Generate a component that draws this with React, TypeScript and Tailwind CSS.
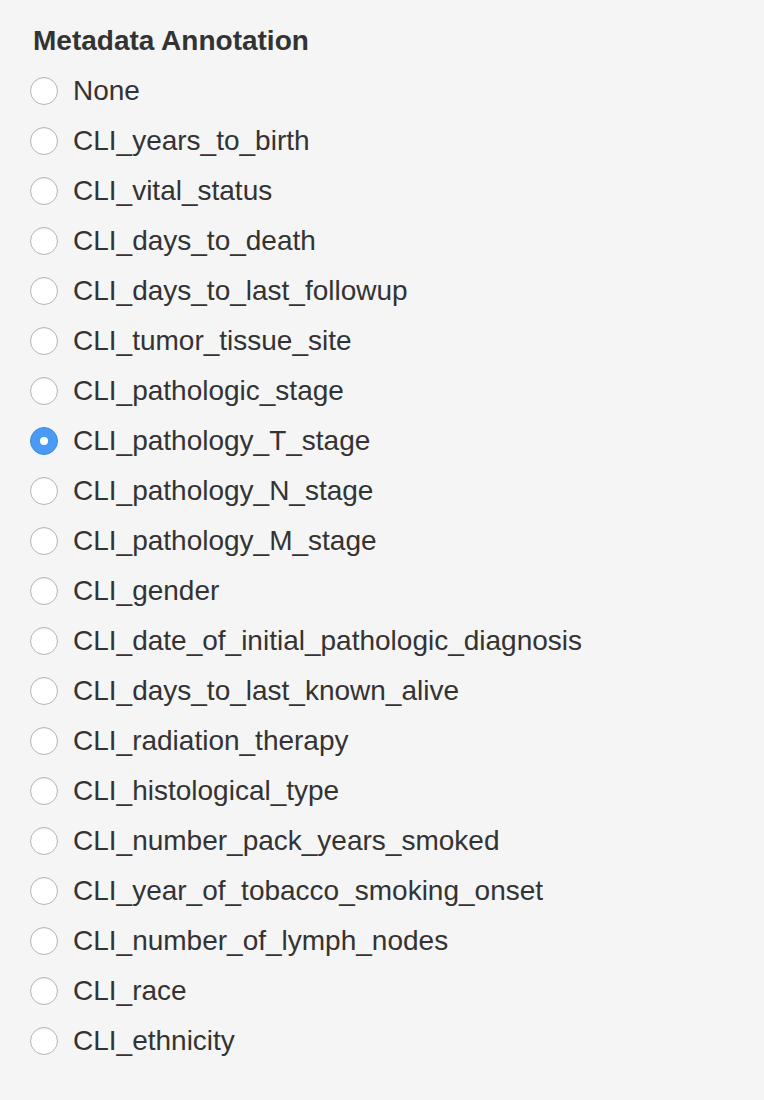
import React from "react";

const items = [
  "None",
  "CLI_years_to_birth",
  "CLI_vital_status",
  "CLI_days_to_death",
  "CLI_days_to_last_followup",
  "CLI_tumor_tissue_site",
  "CLI_pathologic_stage",
  "CLI_pathology_T_stage",
  "CLI_pathology_N_stage",
  "CLI_pathology_M_stage",
  "CLI_gender",
  "CLI_date_of_initial_pathologic_diagnosis",
  "CLI_days_to_last_known_alive",
  "CLI_radiation_therapy",
  "CLI_histological_type",
  "CLI_number_pack_years_smoked",
  "CLI_year_of_tobacco_smoking_onset",
  "CLI_number_of_lymph_nodes",
  "CLI_race",
  "CLI_ethnicity",
];

export default function App() {
  const selected = "CLI_pathology_T_stage";
  return (
    <div
      className="w-[764px] h-[1100px] bg-[#f5f5f5] text-[#333333] pl-[33px] pt-[25px]"
      style={{ fontFamily: '"Liberation Sans", Arial, sans-serif' }}
    >
      <div className="text-[28px] font-bold leading-[32px] mb-[9px]">Metadata Annotation</div>
      <div className="flex flex-col">
        {items.map((it) => {
          const on = it === selected;
          return (
            <div key={it} className="flex items-center h-[50px] -ml-[3px]">
              {on ? (
                <span className="w-[28px] h-[28px] rounded-full bg-[#4a9af5] border border-[#3b8ae8] flex items-center justify-center shrink-0">
                  <span className="w-[8px] h-[8px] rounded-full bg-white" />
                </span>
              ) : (
                <span className="w-[28px] h-[28px] rounded-full bg-white border border-[#b5b5b5] shadow-[inset_0_1px_1px_rgba(0,0,0,0.06)] shrink-0" />
              )}
              <span className="ml-[15px] text-[28px] leading-[30px]">{it}</span>
            </div>
          );
        })}
      </div>
    </div>
  );
}
